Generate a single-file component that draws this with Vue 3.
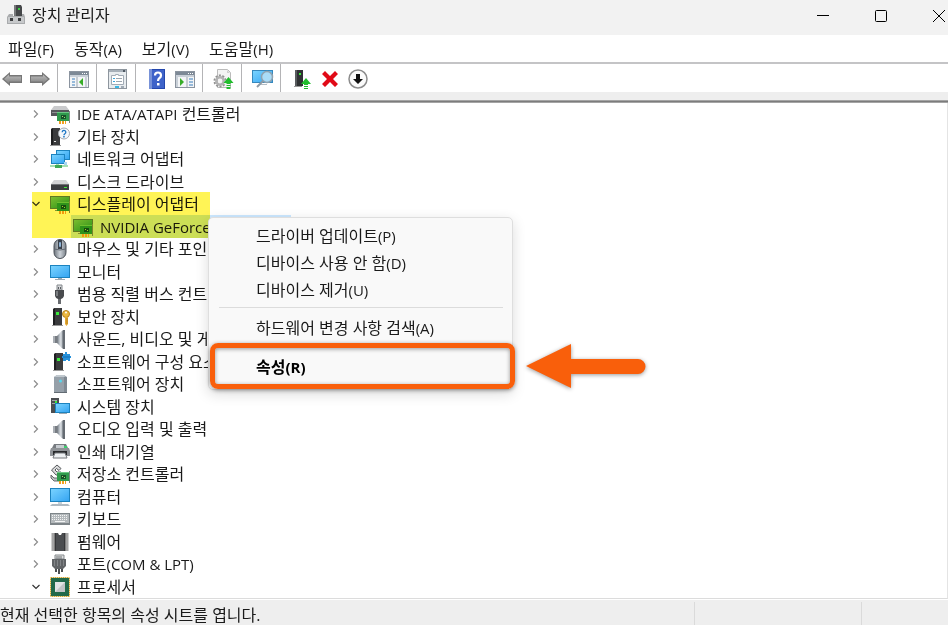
<script setup>
import { ref } from 'vue'

const menus = [
  { label: '파일', key: '(F)' },
  { label: '동작', key: '(A)' },
  { label: '보기', key: '(V)' },
  { label: '도움말', key: '(H)' },
]

const tower = (x) =>
  `<path d="M${x} 2l2-1h7v17h-9z" fill="#3a3b3d"/><path d="M${x} 2l2-1v17h-2z" fill="#1d1e20"/><path d="M${x - 1} 18h11v1h-11z" fill="#9a9a9a"/>`
const led = (x, y) => `<rect x="${x}" y="${y}" width="3" height="3" fill="#3bea3b"/>`
const card =
  '<path d="M7 8h12v9H7z" fill="#2f9a4c"/><path d="M7 8h12v1H7z" fill="#6cc785"/><path d="M11 11h5v4h-5z" fill="#17502a"/><path d="M12 12h1v1h-1zm2 1h1v1h-1z" fill="#a6d873"/><path d="M19 7h1v12h-1z" fill="#7c8a84"/><path d="M9 17h2v3H9zm3 0h2v3h-2zm3 0h1v3h-1z" fill="#f2a01e"/>'
const screen = (x, y, w, h) =>
  `<rect x="${x}" y="${y}" width="${w}" height="${h}" fill="#1c83bf"/><rect x="${x + 1}" y="${y + 1}" width="${w - 2}" height="${h - 2}" fill="url(#blue)"/>`
const speaker =
  '<path d="M3 7h4v7H3z" fill="#777c82"/><path d="M3 7h2v7H3z" fill="#a9aeb4"/><path d="M7 7l6-6v19l-6-6z" fill="url(#steel)"/><path d="M13 1h2v19h-2z" fill="#656b72"/><path d="M11 3v15" stroke="#e8ebee"/>'

const icons = {
  ide: '<path d="M4 2h12l3 4H1z" fill="#c9cacc"/><path d="M1 6h18v6H1z" fill="#55575a"/><path d="M2 8h6v1H2z" fill="#8e9093"/>' + card,
  unknown: tower(1) + '<rect x="4" y="14" width="2" height="1" fill="#e8e8e8"/><circle cx="14" cy="6.500" r="5.500" fill="#f4f8fc" stroke="#a5abb2"/><path d="M12.200 5.200a1.800 1.800 0 1 1 2.700 1.500q-.9.500-.9 1.500" fill="none" stroke="#1d76c4" stroke-width="1.300"/><rect x="13.200" y="9" width="1.500" height="1.500" fill="#1d76c4"/>',
  network: screen(6, 1, 14, 10) + screen(1, 5, 14, 10) + '<path d="M6 15h3v1h9v2H0v-2h6z" fill="#a6dfb1"/><path d="M5 16h7v3H5z" fill="#3fa956"/><path d="M14 13h3v3h-3z" fill="#a9d5ef"/>',
  disk: '<path d="M4 8h12l3 4H1z" fill="#d3d4d6"/><path d="M1 12h18v6H1z" fill="#3b3d40"/><path d="M1 12h18v1H1z" fill="#707276"/><path d="M14 15h3v1h-3z" fill="#3bea3b"/>',
  display: '<rect y="2" width="20" height="13" fill="#5f7f61"/><rect x="1" y="3" width="18" height="11" fill="url(#green)"/><path d="M5 16h6v1H5z" fill="#8b9a8c"/>' + card,
  mouse: '<rect x="4" y=".5" width="12" height="19" rx="6" fill="url(#steel)" stroke="#4a5058"/><path d="M8 1h4v9H8z" fill="#39414c"/><rect x="9" y="3" width="2" height="5" rx="1" fill="#8fb5d8"/><path d="M4 10q6 2 12 0" fill="none" stroke="#606770"/>',
  monitor: screen(0, 3, 20, 13) + '<path d="M8 16h4v1H8zM5 17h10v1H5z" fill="#9daab4"/>',
  usb: '<path d="M7 1h5v5H7z" fill="#d5d7d9" stroke="#85898d"/><path d="M8 3h1v2H8zm2 0h1v2h-1z" fill="#595d61"/><path d="M5 6h9v6q-1 3-3 3H8q-2 0-3-3z" fill="#494b4e"/><path d="M8 15h3v5H8z" fill="#686b6f"/><path d="M6 7h2v5H6z" fill="#7a7d80"/>',
  security: tower(3) + led(6, 5) + '<circle cx="16" cy="7" r="3.500" fill="#edb941" stroke="#b7801d"/><circle cx="16" cy="5.500" r="1" fill="#fff"/><path d="M15 10h3v7l-1.500 2-1.500-2z" fill="#e5a932"/><path d="M17 11v6" stroke="#b7801d"/>',
  sound: speaker,
  component: tower(4) + led(7, 6) + '<path d="M13 2h2V0h2v2h3v2h1v2h-1v3h-2V8h-2v1h-3V6h-1V4h1z" fill="#2792dc"/><path d="M13 5h7" stroke="#176eb0"/>',
  software: '<path d="M4 3l3-2h7l3 2v16H4z" fill="#96a0a9"/><path d="M4 3l3-2h7l1 2z" fill="#c0c8ce"/><path d="M14 3h3v16h-3z" fill="#7f8992"/><circle cx="10.500" cy="7" r="1.500" fill="#58d7ee"/><path d="M4 18h13v1H4z" fill="#626b73"/>',
  system: '<path d="M1 1h8v15H1z" fill="#4b4e51"/><path d="M2 3h5v1H2zm0 3h5v1H2z" fill="#a2a5a8"/><path d="M5 4h2v2H5z" fill="#3bea3b"/>' + screen(5, 6, 15, 10) + '<path d="M9 16h8v1H9z" fill="#9daab4"/>',
  printer: '<path d="M4 2h12l2 4H2z" fill="#777b80"/><path d="M6 3h8v3H6z" fill="#c7cbd0"/><path d="M1 6h18l1 3v5H0V9z" fill="#8f9397"/><path d="M3 9h14v4H3z" fill="#282a2c"/><path d="M5 11h10l2 5H3z" fill="#edf0f2" stroke="#75797d"/><path d="M14 4h3v2h-3z" fill="#39d16c"/>',
  storage: '<path d="M1.500 6L7 1l4 3.500-2 2-2.500-2L5 6l2 2h4v3H6z" fill="#d9dadb" stroke="#55585b"/><path d="M1 11l3 3h5v3H4l-3-3z" fill="#bcbfc1" stroke="#66696c"/>' + card,
  computer: screen(0, 1, 20, 14) + '<path d="M8 15h4v2H8z" fill="#c8d1d8"/><path d="M2 17h16l2 2H0z" fill="#b0bac2"/>',
  keyboard: '<rect y="4" width="20" height="12" fill="#7e8589"/><rect x="1" y="5" width="18" height="9" fill="#b4b9bc"/><path d="M2 6.500h16M2 8.500h16M2 10.500h16" stroke="#f3f4f4" stroke-dasharray="1 1"/><path d="M5 12.500h10" stroke="#f3f4f4"/>',
  firmware: '<path d="M5 1h3l1 2h2l1-2h3v18H5z" fill="#4b4d50"/><path d="M5 1v18M15 1v18" stroke="#222"/><path d="M3 1.500v18M17 1.500v18" stroke="#4a4a4a" stroke-width="3" stroke-dasharray="1 1"/>',
  port: '<path d="M5 1h9v4H5z" fill="#dcdedf" stroke="#85898c"/><path d="M7 2v3m2-3v3m2-3v3" stroke="#707477"/><path d="M2 5h14v7l-3 3H5l-3-3z" fill="#616467"/><path d="M4.500 6v6m3-6v6m3-6v6m3-6v6" stroke="#828588"/><path d="M5 15h2v3H5zm6 0h2v3h-2zm-3 0h2v5H8z" fill="#4c4f52"/>',
  processor: '<rect x="1" y="1" width="18" height="18" fill="none" stroke="#d5a637" stroke-width="2" stroke-dasharray="1 1"/><rect x="1" y="1" width="18" height="18" fill="#21694a"/><rect x=".5" y=".5" width="19" height="19" fill="none" stroke="#d5a637" stroke-dasharray="1 1"/><rect x="5" y="5" width="10" height="10" fill="#e2e4e5"/><path d="M5 15l10-10v10z" fill="#c1c4c6"/>',
}

const toolIcons = {
  back: '<path d="M0 10l8-7v3h12v8H8v3z" fill="#777"/><path d="M2 10l5-4.500v2h12v5H7v2z" fill="url(#arrow)"/>',
  forward: '<path d="M20 10l-8-7v3H0v8h12v3z" fill="#777"/><path d="M18 10l-5-4.500v2H1v5h12v2z" fill="url(#arrow)"/>',
  console: '<rect x=".5" y="2.500" width="19" height="16" fill="#f3f5f7" stroke="#8b949f"/><path d="M1 3h18v3H1z" fill="#7d8996"/><path d="M13 4h1v1h-1zm2 0h1v1h-1zm2 0h1v1h-1z" fill="#fff"/><path d="M1 6h18v2H1z" fill="#c9d0d8"/><path d="M8 8v10" stroke="#9ba4ae"/><path d="M3 10h3m-3 3h3m-3 3h3" stroke="#3b7ebd"/><path d="M10 13l4-4v8z" fill="#37ad27"/><path d="M17 8v10" stroke="#c9d0d8" stroke-width="2"/>',
  props: '<rect x=".5" y=".5" width="18" height="19" fill="#e8ecef" stroke="#8e969e"/><path d="M1 1h17v2H1z" fill="#a7b0b9"/><path d="M15 1h2v2h-2z" fill="#4e5863"/><path d="M3.500 6.500h4v-1h3v1h5v9h-12z" fill="#fff" stroke="#a1abb5"/><path d="M5 9.500h2m-2 3h2" stroke="#3ba5dd"/><path d="M8 9.500h6m-6 3h6" stroke="#9ca5ae"/><path d="M7 18h4" stroke="#38b7e5" stroke-width="2"/><path d="M13 18h3" stroke="#a1abb5" stroke-width="2"/>',
  help: '<rect x="2" width="16" height="20" fill="#2447ad"/><path d="M2 0h3v20H2z" fill="#7892d8"/><rect x="5" y="1" width="12" height="18" fill="#3e63c9"/><path d="M8 6.500q0-3 3-3t3 3q0 1.500-1.500 2.500t-1.500 3" fill="none" stroke="#fff" stroke-width="2.200"/><rect x="10" y="14" width="2.500" height="2.500" fill="#fff"/>',
  panel: '<rect x=".5" y="2.500" width="19" height="16" fill="#f3f5f7" stroke="#8b949f"/><path d="M1 3h18v3H1z" fill="#7d8996"/><path d="M13 4h1v1h-1zm2 0h1v1h-1zm2 0h1v1h-1z" fill="#fff"/><path d="M1 6h18v2H1z" fill="#c9d0d8"/><path d="M12 8v10" stroke="#9ba4ae"/><path d="M14 10h4m-4 3h4m-4 3h4" stroke="#3b7ebd"/><path d="M5 9l4 4-4 4z" fill="#37ad27"/><path d="M2 8v10" stroke="#c9d0d8" stroke-width="2"/>',
  gear: '<path d="M3.500.5h10l3 3v15h-13z" fill="#f4f4f4" stroke="#bbb"/><path d="M13 1v3h3z" fill="#cfcfcf"/><circle cx="6" cy="12" r="5.500" fill="none" stroke="#929292" stroke-width="2" stroke-dasharray="2 1.450"/><circle cx="6" cy="12" r="3.700" fill="none" stroke="#b3b3b3" stroke-width="2.500"/><path d="M14.500 8l5 6h-3v1h-4v-1h-3z" fill="#22bd2d"/><path d="M12.500 16h4v1h-4zm0 2h4v2h-4z" fill="#22bd2d"/>',
  scan: '<rect x="-1" y="1" width="21" height="13" fill="#3688bd"/><rect y="2" width="19" height="11" fill="url(#blue)"/><path d="M6 15h8v1H6z" fill="#b3bdc5"/><circle cx="14" cy="8" r="5.500" fill="#a9dcf8" stroke="#8fa3b1" stroke-width="1.500"/><path d="M10 12l-6 6" stroke="#8e9aa4" stroke-width="2"/>',
  update: '<path d="M3 1h8v16H3z" fill="#303234"/><path d="M3 1h2v16H3z" fill="#595c5f"/><path d="M2 17h8v1H2z" fill="#999"/><rect x="7" y="4" width="2" height="2" fill="#3bea3b"/><path d="M14 9l5 6h-3v1h-4v-1H9z" fill="#22bd2d"/><path d="M12 17h4v1h-4zm0 2h4v1h-4z" fill="#22bd2d"/>',
  remove: '<path d="M2 5l3-3 5 5 5-5 3 3-5 5 5 5-3 3-5-5-5 5-3-3 5-5z" fill="#e10a17"/>',
  disable: '<circle cx="10" cy="10" r="9" fill="#fbfbfb" stroke="#8c8c8c" stroke-width="1.500"/><path d="M8 5h4v5h3l-5 5-5-5h3z" fill="#111"/>',
}

const toolGroups = [
  [['back', '뒤로'], ['forward', '앞으로']],
  [['console', '콘솔 트리 표시/숨기기']],
  [['props', '속성']],
  [['help', '도움말'], ['panel', '작업 창 표시/숨기기']],
  [['gear', '드라이버 업데이트']],
  [['scan', '하드웨어 변경 사항 검색']],
  [['update', '장치 사용'], ['remove', '장치 제거'], ['disable', '장치 사용 안 함']],
]

const devices = ref([
  { icon: 'ide', latin: 'IDE ATA/ATAPI', name: ' 컨트롤러' },
  { icon: 'unknown', name: '기타 장치' },
  { icon: 'network', name: '네트워크 어댑터' },
  { icon: 'disk', name: '디스크 드라이브' },
  { icon: 'display', name: '디스플레이 어댑터', open: true, marked: true, children: [{ icon: 'display', name: 'NVIDIA GeForce' }] },
  { icon: 'mouse', name: '마우스 및 기타 포인팅 장치' },
  { icon: 'monitor', name: '모니터' },
  { icon: 'usb', name: '범용 직렬 버스 컨트롤러' },
  { icon: 'security', name: '보안 장치' },
  { icon: 'sound', name: '사운드, 비디오 및 게임 컨트롤러' },
  { icon: 'component', name: '소프트웨어 구성 요소' },
  { icon: 'software', name: '소프트웨어 장치' },
  { icon: 'system', name: '시스템 장치' },
  { icon: 'sound', name: '오디오 입력 및 출력' },
  { icon: 'printer', name: '인쇄 대기열' },
  { icon: 'storage', name: '저장소 컨트롤러' },
  { icon: 'computer', name: '컴퓨터' },
  { icon: 'keyboard', name: '키보드' },
  { icon: 'firmware', name: '펌웨어' },
  { icon: 'port', name: '포트', suffix: '(COM & LPT)' },
  { icon: 'processor', name: '프로세서', open: true },
])

const actions = [
  { label: '드라이버 업데이트', key: '(P)' },
  { label: '디바이스 사용 안 함', key: '(D)' },
  { label: '디바이스 제거', key: '(U)' },
]
</script>

<template>
  <div class="window">
    <svg class="defs" aria-hidden="true">
      <defs>
        <linearGradient id="blue" x1="0" y1="0" x2="1" y2="1"><stop offset="0" stop-color="#79d3ff" /><stop offset="1" stop-color="#36a5f2" /></linearGradient>
        <linearGradient id="green" x1="0" y1="0" x2="1" y2="1"><stop offset="0" stop-color="#7cc58a" /><stop offset="1" stop-color="#2c9a48" /></linearGradient>
        <linearGradient id="steel"><stop offset="0" stop-color="#6c737b" /><stop offset=".5" stop-color="#ccd2d8" /><stop offset="1" stop-color="#7b828a" /></linearGradient>
        <linearGradient id="arrow" x1="0" y1="0" x2="0" y2="1"><stop offset="0" stop-color="#bcbcbc" /><stop offset="1" stop-color="#828282" /></linearGradient>
      </defs>
    </svg>

    <header class="titlebar">
      <svg class="appicon" viewBox="0 0 18 20" aria-hidden="true">
        <path d="M7 0h7l1 2v9H7z" fill="#454749" /><path d="M7 0h2v11H7z" fill="#77797b" /><rect x="11" y="3" width="2" height="2" fill="#3bd045" />
        <path d="M2 9h4v2h9V9h2l1 3v7H0v-7z" fill="#a9abad" /><path d="M1 12h16v6H1z" fill="#c7c9cb" /><path d="M3 13h3v3H3zm8 0h3v3h-3z" fill="#3c3e40" />
      </svg>
      <h1>장치 관리자</h1>
      <div class="controls">
        <button type="button" aria-label="최소화"><svg viewBox="0 0 14 14"><path d="M1 6.500h12" /></svg></button>
        <button type="button" aria-label="최대화"><svg viewBox="0 0 14 14"><rect x="1.500" y="1.500" width="11" height="11" rx="1" /></svg></button>
        <button type="button" aria-label="닫기"><svg viewBox="0 0 14 14"><path d="M1 1l12 12M13 1L1 13" /></svg></button>
      </div>
    </header>

    <nav class="menubar">
      <button v-for="m in menus" :key="m.label" type="button">{{ m.label }}<span class="latin">{{ m.key }}</span></button>
    </nav>

    <div class="toolbar" role="toolbar">
      <div v-for="(group, g) in toolGroups" :key="g" class="group">
        <button v-for="[icon, label] in group" :key="icon" type="button" :aria-label="label">
          <svg viewBox="0 0 20 20" aria-hidden="true" v-html="toolIcons[icon]" />
        </button>
      </div>
    </div>
    <div class="band"></div>

    <main class="content">
      <ul class="tree" role="tree">
        <li v-for="d in devices" :key="d.name" role="treeitem" :class="{ marked: d.marked }" :aria-expanded="!!d.open">
          <div class="row">
            <button class="chevron" :class="{ open: d.open }" type="button" :aria-label="d.name" @click="d.open = !d.open">
              <svg viewBox="0 0 10 10"><path d="M3 1.500l3.500 3.500L3 8.500" /></svg>
            </button>
            <svg class="icon" viewBox="0 0 20 20" aria-hidden="true" v-html="icons[d.icon]" />
            <span class="name"><span v-if="d.latin" class="latin">{{ d.latin }}</span>{{ d.name }}<span v-if="d.suffix" class="latin">{{ d.suffix }}</span></span>
          </div>
          <ul v-if="d.open && d.children" role="group">
            <li v-for="c in d.children" :key="c.name" role="treeitem" aria-selected="true" class="child">
              <div class="row selected">
                <svg class="icon" viewBox="0 0 20 20" aria-hidden="true" v-html="icons[c.icon]" />
                <span class="latin">{{ c.name }}</span>
              </div>
            </li>
          </ul>
        </li>
      </ul>

      <div class="context" role="menu">
        <button v-for="a in actions" :key="a.label" type="button" role="menuitem">{{ a.label }}<span class="latin">{{ a.key }}</span></button>
        <hr />
        <button type="button" role="menuitem">하드웨어 변경 사항 검색<span class="latin">(A)</span></button>
        <button class="default" type="button" role="menuitem">속성<span class="latin">(R)</span></button>
      </div>

      <svg class="pointer" viewBox="0 0 122 46" aria-hidden="true">
        <path d="M1 23L46 1v15h67a7 7 0 0 1 0 15H46v14z" fill="#f95f0b" />
      </svg>
    </main>

    <footer class="status">
      <span>현재 선택한 항목의 속성 시트를 엽니다.</span><span></span><span></span>
    </footer>
  </div>
</template>

<style>
body {
  margin: 0;
}
</style>

<style scoped>
.window {
  display: flex;
  flex-direction: column;
  min-height: 100vh;
  overflow: hidden;
  background: #fff;
  color: #1a1a1a;
  font: 16px/22px "Open Sans", "Noto Sans CJK KR", sans-serif;
}
.defs {
  position: absolute;
  width: 0;
  height: 0;
}
button {
  padding: 0;
  border: 0;
  background: none;
  color: inherit;
  font: inherit;
  white-space: nowrap;
}
.latin {
  font-size: 15px;
}
.name {
  white-space: pre;
}
.titlebar {
  display: flex;
  align-items: flex-start;
  height: 35px;
  padding-left: 7px;
  background: #f2f2f2;
}
.appicon {
  width: 18px;
  height: 20px;
  margin: 5px 7px 0 0;
}
h1 {
  flex: 1;
  margin: 0;
  font-size: 16px;
  font-weight: 400;
  line-height: 30px;
}
.controls {
  display: flex;
  margin-right: -20px;
}
.controls button {
  display: flex;
  align-items: center;
  justify-content: center;
  width: 58px;
  height: 32px;
}
.controls svg {
  width: 14px;
  height: 14px;
  fill: none;
  stroke: #000;
}
.menubar {
  display: flex;
  align-items: center;
  gap: 20px;
  height: 27px;
  padding-left: 8px;
  border-bottom: 2px solid #c4c4c6;
}
.toolbar {
  display: flex;
  align-items: center;
  height: 28px;
  margin-left: -2px;
}
.group {
  display: flex;
  align-items: center;
  height: 28px;
}
.group + .group {
  margin-left: 3px;
  padding-left: 7px;
  border-left: 1px solid #b4b4b6;
}
.group button {
  display: flex;
  align-items: center;
  justify-content: center;
  width: 28px;
  height: 28px;
  padding-top: 2px;
}
.group svg {
  width: 20px;
  height: 20px;
  overflow: visible;
}
.band {
  height: 8px;
  border-bottom: 3px double #a4a4a4;
  background: linear-gradient(#eee 8px, #7c7c7c 8px) border-box;
}
.content {
  position: relative;
  flex: 1;
  border-right: 1px solid #e4e4e4;
  border-bottom: 1px solid #dcdcdc;
}
ul {
  margin: 0;
  padding: 0;
  list-style: none;
}
.row {
  display: flex;
  align-items: center;
  height: 22px;
  padding-left: 31px;
  white-space: nowrap;
}
.tree > li:nth-child(even) .row,
.child .row {
  height: 23px;
}
.tree > li:nth-child(n + 6):nth-child(even) .row {
  height: 22px;
}
.tree > li:nth-child(n + 6):nth-child(odd) .row {
  height: 23px;
}
.marked {
  position: relative;
}
.marked::after {
  content: "";
  position: absolute;
  inset: -1px auto 0 32px;
  width: 178px;
  background: #fff456;
  mix-blend-mode: multiply;
  pointer-events: none;
}
.row.selected {
  width: 218px;
  margin-left: 71px;
  padding-left: 2px;
  background: #cce8ff;
}
.chevron {
  display: flex;
  width: 10px;
  height: 10px;
  margin-right: 9px;
}
.chevron svg {
  width: 10px;
  height: 10px;
  fill: none;
  stroke: #8c8c8c;
  stroke-width: 1.2;
}
.chevron.open svg {
  transform: rotate(90deg);
  stroke: #333;
}
.icon {
  width: 20px;
  height: 20px;
  margin-right: 7px;
  overflow: visible;
}
.context {
  position: absolute;
  top: 114px;
  left: 208px;
  box-sizing: border-box;
  display: flex;
  flex-direction: column;
  width: 305px;
  padding-top: 4px;
  border: 1px solid #dedede;
  border-radius: 5px;
  background: #f9f9f9;
  box-shadow: 0 4px 14px rgba(0, 0, 0, 0.14);
}
.context button {
  height: 27px;
  padding-left: 47px;
  text-align: left;
}
.context hr {
  width: 284px;
  height: 1px;
  margin: 4px auto 6px;
  border: 0;
  background: #dcdcdc;
}
.context .default {
  position: relative;
  height: 46px;
  margin-top: 2px;
  padding-top: 2px;
  font-weight: 700;
  color: #000;
}
.default::after {
  content: "";
  position: absolute;
  inset: 0 -3px 0 1px;
  border: 5px solid #f95f0b;
  border-radius: 8px;
  box-shadow: 0 1px 4px rgba(0, 0, 0, 0.45), inset 0 1px 4px rgba(0, 0, 0, 0.4);
}
.pointer {
  position: absolute;
  top: 240px;
  left: 525px;
  width: 122px;
  height: 46px;
  filter: drop-shadow(0 1px 2px rgba(0, 0, 0, 0.4));
}
.status {
  display: flex;
  align-items: flex-end;
  height: 23px;
  margin-top: 1px;
  padding-top: 2px;
  background: #eee;
}
.status span {
  box-sizing: border-box;
  width: 167px;
  height: 23px;
  border-right: 1px solid #dadada;
  line-height: 26px;
}
.status span:first-child {
  flex: 1;
}
.status span:last-child {
  width: 86px;
  border-right: 0;
}
</style>
